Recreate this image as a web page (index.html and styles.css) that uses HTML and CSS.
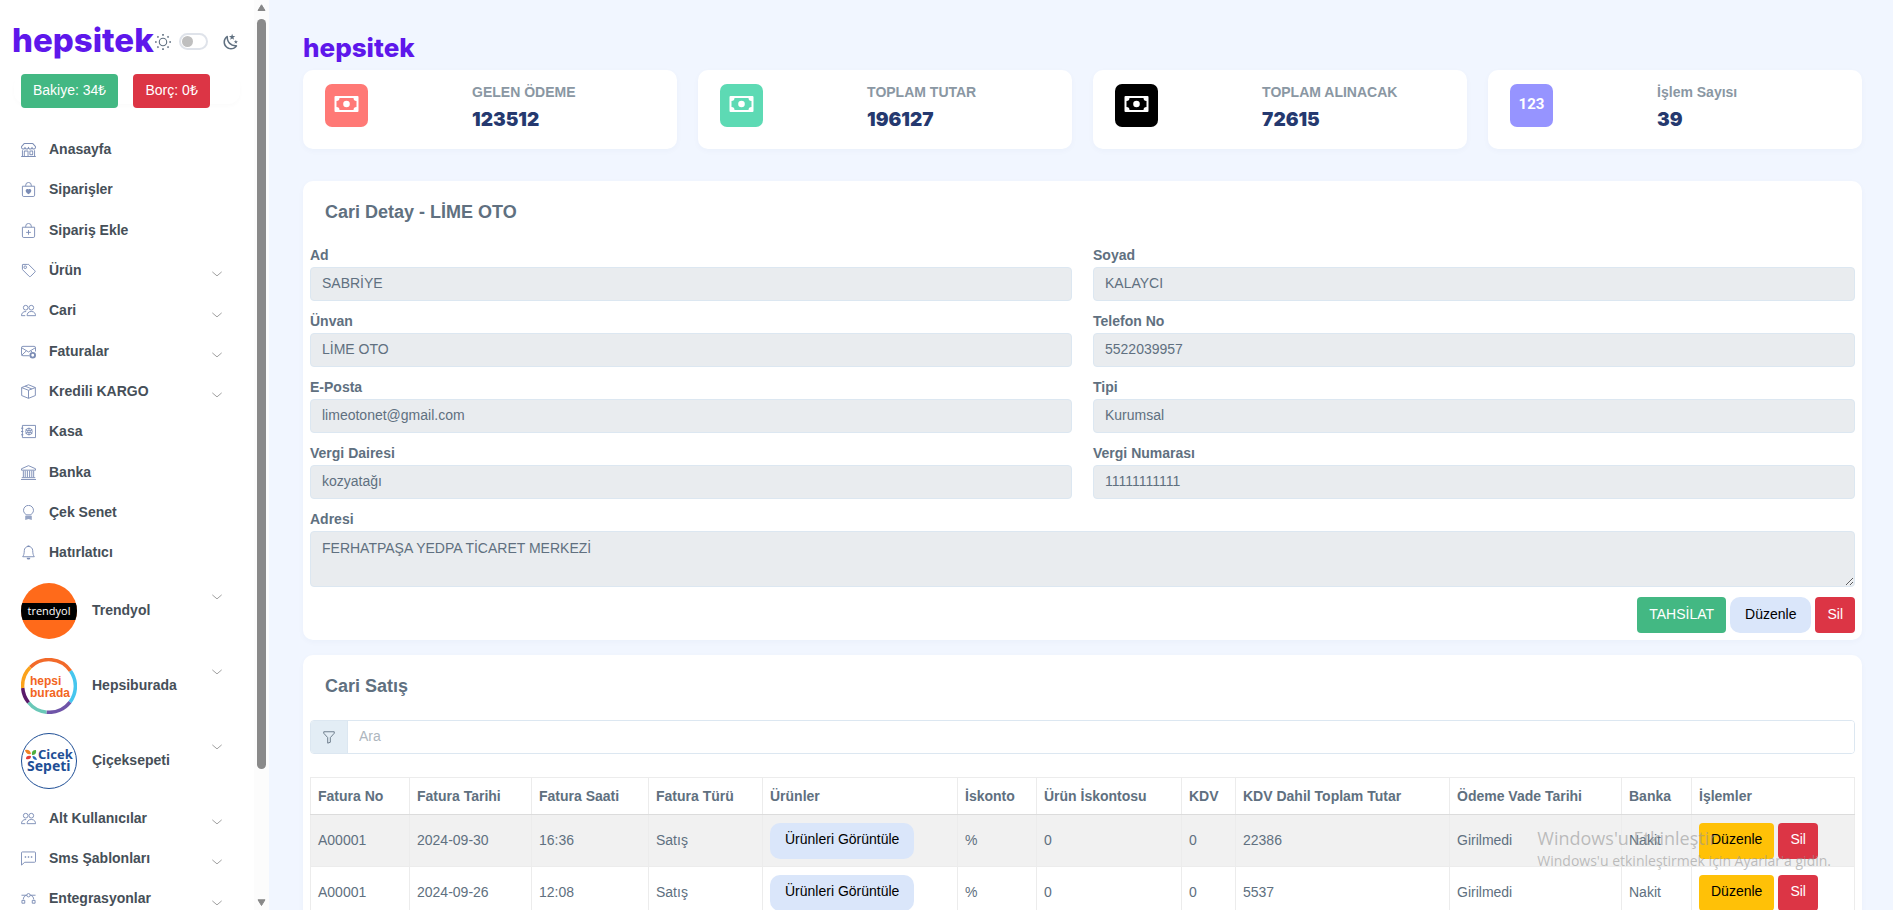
FILE: index.html
```html
<!DOCTYPE html>
<html lang="tr">
<head>
<meta charset="utf-8">
<meta name="viewport" content="width=device-width, initial-scale=1">
<title>hepsitek - Cari Detay</title>
<link rel="stylesheet" href="styles.css">
</head>
<body>
<svg class="sprite" aria-hidden="true">
  <symbol id="i-chevron" viewBox="0 0 16 16"><path d="M1 5l7 6 7-6" fill="none" stroke="currentColor" stroke-width="1.5" stroke-linecap="round" stroke-linejoin="round"/></symbol>
  <symbol id="i-shop" viewBox="0 0 16 16"><path fill="currentColor" d="M2.97 1.35A1 1 0 0 1 3.73 1h8.54a1 1 0 0 1 .76.35l2.609 3.044A1.5 1.5 0 0 1 16 5.37v.255a2.375 2.375 0 0 1-4.25 1.458A2.37 2.37 0 0 1 9.875 8 2.37 2.37 0 0 1 8 7.083 2.37 2.37 0 0 1 6.125 8a2.37 2.37 0 0 1-1.875-.917A2.375 2.375 0 0 1 0 5.625V5.37a1.5 1.5 0 0 1 .361-.976zm1.78 4.275a1.375 1.375 0 0 0 2.75 0 .5.5 0 0 1 1 0 1.375 1.375 0 0 0 2.75 0 .5.5 0 0 1 1 0 1.375 1.375 0 1 0 2.75 0V5.37a.5.5 0 0 0-.12-.325L12.27 2H3.73L1.12 5.045A.5.5 0 0 0 1 5.37v.255a1.375 1.375 0 0 0 2.75 0 .5.5 0 0 1 1 0M1.5 8.5A.5.5 0 0 1 2 9v6h1v-5a1 1 0 0 1 1-1h3a1 1 0 0 1 1 1v5h6V9a.5.5 0 0 1 1 0v6h.5a.5.5 0 0 1 0 1H.5a.5.5 0 0 1 0-1H1V9a.5.5 0 0 1 .5-.5M4 15h3v-5H4zm5-5a1 1 0 0 1 1-1h2a1 1 0 0 1 1 1v3a1 1 0 0 1-1 1h-2a1 1 0 0 1-1-1zm3 0h-2v3h2z"/></symbol>
  <symbol id="i-bag-heart" viewBox="0 0 16 16"><path d="M1.5 4.5h13V14a1.500 1.500 0 0 1-1.500 1.500H3A1.500 1.500 0 0 1 1.500 14zM5 4.500V3.500a3 3 0 0 1 6 0v1" fill="none" stroke="currentColor"/><path d="M8 7.990c1.660-1.700 5.830 1.280 0 5.130-5.830-3.850-1.660-6.830 0-5.130" fill="currentColor"/></symbol>
  <symbol id="i-bag-plus" viewBox="0 0 16 16"><path d="M1.5 4.5h13V14a1.500 1.500 0 0 1-1.500 1.500H3A1.500 1.500 0 0 1 1.500 14zM5 4.500V3.500a3 3 0 0 1 6 0v1M8 7.500v5M5.500 10h5" fill="none" stroke="currentColor"/></symbol>
  <symbol id="i-tag" viewBox="0 0 16 16"><path d="M1.500 2v4.590a1 1 0 0 0 .29.700l7 7a1 1 0 0 0 1.420 0l4.590-4.580a1 1 0 0 0 0-1.420l-7-7A1 1 0 0 0 7.090 1.500H2a.5.5 0 0 0-.5.5z" fill="none" stroke="currentColor"/><circle cx="4.500" cy="4.500" r="1.400" fill="none" stroke="currentColor"/></symbol>
  <symbol id="i-people" viewBox="0 0 16 16"><path d="M11 7.500a2.500 2.500 0 1 0 0-5 2.500 2.500 0 0 0 0 5zM6.500 13.500h9c0-2-1-4.500-4.500-4.500s-4.500 2.500-4.500 4.500zM5 7.500a2.500 2.500 0 1 1 0-5 2.500 2.500 0 0 1 2.500 2.500 2.500 2.500 0 0 1-2.500 2.500M5.500 9.100C2 8.800.5 11.300.5 13.500h4" fill="none" stroke="currentColor" stroke-linejoin="round"/></symbol>
  <symbol id="i-mail" viewBox="0 0 16 16"><path d="M9 12.500H2A1.500 1.500 0 0 1 .5 11V4A1.500 1.500 0 0 1 2 2.500h12A1.500 1.500 0 0 1 15.500 4v4M.7 4L8 8.500 15.300 4M.7 12l5-4.700M10.300 7.400l1.500 1" fill="none" stroke="currentColor"/><circle cx="12.500" cy="12" r="2.500" fill="none" stroke="currentColor" stroke-width="2"/></symbol>
  <symbol id="i-box" viewBox="0 0 16 16"><path d="M8 .8l7.300 3v8.500L8 15.300.7 12.300V3.800zM.7 3.800L8 6.700l7.300-2.900M8 6.700v8.500M4.300 2.300l7.300 3" fill="none" stroke="currentColor" stroke-linejoin="round"/></symbol>
  <symbol id="i-safe" viewBox="0 0 16 16"><path d="M1.500 1.500h14v13h-14zM0 4.500h2.500M0 8h2.500M0 11.500h2.500M8.500 4v8M5 6l7 4M5 10l7-4" fill="none" stroke="currentColor"/><circle cx="8.500" cy="8" r="3.500" fill="none" stroke="currentColor"/><circle cx="8.500" cy="8" r="1.300" fill="#fff" stroke="currentColor"/></symbol>
  <symbol id="i-bank" viewBox="0 0 16 16"><path d="M.5 4L8 .7 15.500 4v1.500H.5zM0 15.500h16M.8 13.500h14.400M2.500 6v7M4.500 6v7M6.800 6v7M9.200 6v7M11.500 6v7M13.500 6v7" fill="none" stroke="currentColor"/></symbol>
  <symbol id="i-bulb" viewBox="0 0 16 16"><path d="M5.500 10.500C4.500 9 2.700 8.300 2.700 5.700a5.200 5.200 0 0 1 10.600 0c0 2.600-1.800 3.300-2.800 4.800z" fill="none" stroke="currentColor"/><path d="M4.500 11.500h7v4.500L8 15l-3.500 1z" fill="currentColor" opacity=".8"/></symbol>
  <symbol id="i-bell" viewBox="0 0 16 16"><path d="M8 1.500A4.500 4.500 0 0 0 3.500 6c0 3.500-.8 5.300-1.700 6.500h12.400c-.9-1.200-1.700-3-1.700-6.500A4.500 4.500 0 0 0 8 1.500z" fill="none" stroke="currentColor" stroke-linejoin="round"/><path d="M6 13.500h4a2 2 0 0 1-4 0zM7 .500h2v1.500H7z" fill="currentColor"/></symbol>
  <symbol id="i-chat" viewBox="0 0 16 16"><path d="M.5 15V2a1 1 0 0 1 1-1h13a1 1 0 0 1 1 1v9a1 1 0 0 1-1 1H4z" fill="none" stroke="currentColor" stroke-linejoin="round"/><path d="M4 6.500h1.500M7.250 6.500h1.500M10.500 6.500H12" stroke="currentColor" stroke-width="1.600"/></symbol>
  <symbol id="i-bezier" viewBox="0 0 16 16"><path d="M.5 4.500H6M10 4.500h5.500M6 4.500C3.500 5 2.500 7 2.500 9M10 4.500c2.500.5 3.500 2.500 3.500 4.500M1 10h3v3H1zM12 10h3v3h-3z" fill="none" stroke="currentColor"/><circle cx="8" cy="4.500" r="1.800" fill="none" stroke="currentColor"/></symbol>
  <symbol id="i-cash" viewBox="0 0 24 16"><path fill-rule="evenodd" fill="currentColor" d="M1 0h22a1 1 0 0 1 1 1v14a1 1 0 0 1-1 1H1a1 1 0 0 1-1-1V1a1 1 0 0 1 1-1zM5 2a3 3 0 0 1-3 3v6a3 3 0 0 1 3 3h14a3 3 0 0 1 3-3V5a3 3 0 0 1-3-3zM12 4.700a3.300 3.300 0 1 1 0 6.600 3.300 3.300 0 0 1 0-6.600z"/></symbol>
  <symbol id="i-funnel" viewBox="0 0 16 16"><path d="M2 2h12v1.700L9.500 8.700v5.300l-3 1V8.700L2 3.700z" fill="none" stroke="currentColor" stroke-linejoin="round"/></symbol>
</svg>

<div class="app">
  <aside class="sidebar">
    <div class="sidebar-body">
      <div class="sidebar-top">
        <a class="brand brand-lg" href="#">hepsitek</a>
        <svg class="sun" viewBox="0 0 16 16" aria-hidden="true"><circle cx="8" cy="8" r="3.700" fill="none" stroke="currentColor" stroke-width="1.100"/><path d="M8 0v1.700M8 14.300V16M0 8h1.700M14.300 8H16M2.400 2.400l1.100 1.100M12.500 12.500l1.100 1.100M2.400 13.600l1.100-1.100M12.500 3.500l1.100-1.100" stroke="currentColor" stroke-width="1.600"/></svg>
        <input class="switch" type="checkbox" aria-label="Karanlık mod">
        <svg class="moon" viewBox="0 0 24 24" aria-hidden="true"><path fill="currentColor" d="m17.750 4.090l-2.530 1.940l.91 3.060l-2.630-1.810l-2.630 1.810l.91-3.060l-2.530-1.940L12.440 4l1.060-3l1.060 3l3.190.09m3.500 6.910l-1.640 1.250l.59 1.980l-1.700-1.170l-1.700 1.170l.59-1.980L15.750 11l2.060-.05L18.500 9l.69 1.950l2.060.05m-2.280 4.950c.83-.08 1.720 1.100 1.190 1.850c-.32.45-.66.870-1.080 1.270C15.170 23 8.840 23 4.940 19.070c-3.910-3.900-3.910-10.240 0-14.140c.4-.4.82-.76 1.270-1.080c.75-.53 1.930.36 1.850 1.190c-.27 2.860.69 5.830 2.890 8.020a9.960 9.960 0 0 0 8.020 2.890m-1.640 2.020a12.080 12.080 0 0 1-7.800-3.470c-2.170-2.190-3.330-5-3.490-7.820c-2.810 3.140-2.700 7.960.31 10.980c3.020 3.010 7.840 3.120 10.980.31Z"/></svg>
      </div>
      <div class="balance">
        <button class="btn btn-green" type="button">Bakiye: 34₺</button>
        <button class="btn btn-red" type="button">Borç: 0₺</button>
      </div>
      <nav>
        <ul class="menu">
          <li><a href="#"><svg class="ico"><use href="#i-shop"/></svg><span>Anasayfa</span></a></li>
          <li><a href="#"><svg class="ico"><use href="#i-bag-heart"/></svg><span>Siparişler</span></a></li>
          <li><a href="#"><svg class="ico"><use href="#i-bag-plus"/></svg><span>Sipariş Ekle</span></a></li>
          <li><a href="#"><svg class="ico"><use href="#i-tag"/></svg><span>Ürün</span><svg class="chev"><use href="#i-chevron"/></svg></a></li>
          <li><a href="#"><svg class="ico"><use href="#i-people"/></svg><span>Cari</span><svg class="chev"><use href="#i-chevron"/></svg></a></li>
          <li><a href="#"><svg class="ico"><use href="#i-mail"/></svg><span>Faturalar</span><svg class="chev"><use href="#i-chevron"/></svg></a></li>
          <li><a href="#"><svg class="ico"><use href="#i-box"/></svg><span>Kredili KARGO</span><svg class="chev"><use href="#i-chevron"/></svg></a></li>
          <li><a href="#"><svg class="ico"><use href="#i-safe"/></svg><span>Kasa</span></a></li>
          <li><a href="#"><svg class="ico"><use href="#i-bank"/></svg><span>Banka</span></a></li>
          <li><a href="#"><svg class="ico"><use href="#i-bulb"/></svg><span>Çek Senet</span></a></li>
          <li><a href="#"><svg class="ico"><use href="#i-bell"/></svg><span>Hatırlatıcı</span></a></li>
          <li class="market"><a href="#">
            <svg class="market-logo" viewBox="0 0 56 56"><defs><clipPath id="disc"><circle cx="28" cy="28" r="28"/></clipPath></defs><g clip-path="url(#disc)"><rect width="56" height="56" fill="#ff6a1a"/><rect y="20" width="56" height="17" fill="#000"/></g><text class="ty" x="28" y="32" text-anchor="middle">trendyol</text></svg>
            <span>Trendyol</span><svg class="chev"><use href="#i-chevron"/></svg></a></li>
          <li class="market"><a href="#">
            <svg class="market-logo" viewBox="0 0 56 56"><g fill="none" stroke-width="3.500"><path d="M9.300 9.300A26.300 26.300 0 0 1 49.500 12.900" stroke="#f26a2a"/><path d="M49.500 12.900A26.300 26.300 0 0 1 49 44.100" stroke="#46c6ee"/><path d="M49 44.100A26.300 26.300 0 0 1 25.500 54.200" stroke="#6f55a8"/><path d="M25.500 54.200A26.300 26.300 0 0 1 7.500 44.500" stroke="#6ac8b8"/><path d="M7.500 44.500A26.300 26.300 0 0 1 1.700 30" stroke="#5a1a6a"/><path d="M1.700 30A26.300 26.300 0 0 1 9.300 9.300" stroke="#fba21c"/></g><text class="hb" x="9" y="27">hepsi</text><text class="hb" x="9" y="39">burada</text></svg>
            <span>Hepsiburada</span><svg class="chev"><use href="#i-chevron"/></svg></a></li>
          <li class="market"><a href="#">
            <svg class="market-logo" viewBox="0 0 56 56"><circle cx="28" cy="28" r="27.500" fill="#fff" stroke="#1f4f96"/><path d="M4 17q5-1 6 4q-5 1-6-4z" fill="#f08223"/><path d="M15 17q-5 0-4 5q5 0 4-5z" fill="#4fae3d"/><path d="M5 26q0-4 5-3q0 4-5 3z" fill="#e23b3b"/><path d="M16 27q-1-4-4.500-4q0 4 4.500 4z" fill="#2b6cb8"/><text class="cs cs-top" x="17" y="26">Cicek</text><text class="cs" x="6" y="38">Sepeti</text></svg>
            <span>Çiçeksepeti</span><svg class="chev"><use href="#i-chevron"/></svg></a></li>
          <li><a href="#"><svg class="ico"><use href="#i-people"/></svg><span>Alt Kullanıcılar</span><svg class="chev"><use href="#i-chevron"/></svg></a></li>
          <li><a href="#"><svg class="ico"><use href="#i-chat"/></svg><span>Sms Şablonları</span><svg class="chev"><use href="#i-chevron"/></svg></a></li>
          <li><a href="#"><svg class="ico"><use href="#i-bezier"/></svg><span>Entegrasyonlar</span><svg class="chev"><use href="#i-chevron"/></svg></a></li>
        </ul>
      </nav>
    </div>
    <div class="rail" aria-hidden="true">
      <svg viewBox="0 0 9 7"><path d="M1 6.500L4.500.8 8 6.500z" fill="#888" stroke="#888" stroke-linejoin="round"/></svg>
      <div class="rail-track"><div class="rail-thumb"></div></div>
      <svg viewBox="0 0 9 7"><path d="M1 .8h7L4.500 6.500z" fill="#888" stroke="#888" stroke-linejoin="round"/></svg>
    </div>
  </aside>

  <main class="main">
    <header class="topbar"><a class="brand brand-sm" href="#">hepsitek</a></header>

    <section class="stats">
      <article class="card stat"><div class="stat-icon red"><svg><use href="#i-cash"/></svg></div><div><h6>GELEN ÖDEME</h6><strong>123512</strong></div></article>
      <article class="card stat"><div class="stat-icon green"><svg><use href="#i-cash"/></svg></div><div><h6>TOPLAM TUTAR</h6><strong>196127</strong></div></article>
      <article class="card stat"><div class="stat-icon black"><svg><use href="#i-cash"/></svg></div><div><h6>TOPLAM ALINACAK</h6><strong>72615</strong></div></article>
      <article class="card stat"><div class="stat-icon purple">123</div><div><h6>İşlem Sayısı</h6><strong>39</strong></div></article>
    </section>

    <section class="card panel">
      <h4>Cari Detay - LİME OTO</h4>
      <form class="fields">
        <div class="field"><label for="ad">Ad</label><input id="ad" type="text" value="SABRİYE" readonly></div>
        <div class="field"><label for="soyad">Soyad</label><input id="soyad" type="text" value="KALAYCI" readonly></div>
        <div class="field"><label for="unvan">Ünvan</label><input id="unvan" type="text" value="LİME OTO" readonly></div>
        <div class="field"><label for="tel">Telefon No</label><input id="tel" type="text" value="5522039957" readonly></div>
        <div class="field"><label for="eposta">E-Posta</label><input id="eposta" type="text" value="limeotonet@gmail.com" readonly></div>
        <div class="field"><label for="tipi">Tipi</label><input id="tipi" type="text" value="Kurumsal" readonly></div>
        <div class="field"><label for="vd">Vergi Dairesi</label><input id="vd" type="text" value="kozyatağı" readonly></div>
        <div class="field"><label for="vn">Vergi Numarası</label><input id="vn" type="text" value="11111111111" readonly></div>
        <div class="field wide"><label for="adres">Adresi</label><textarea id="adres" readonly>FERHATPAŞA YEDPA TİCARET MERKEZİ</textarea></div>
      </form>
      <div class="actions">
        <button class="btn btn-green" type="button">TAHSİLAT</button>
        <button class="btn btn-soft" type="button">Düzenle</button>
        <button class="btn btn-red" type="button">Sil</button>
      </div>
    </section>

    <section class="card panel">
      <h4>Cari Satış</h4>
      <div class="search"><label for="ara" aria-label="Ara"><svg><use href="#i-funnel"/></svg></label><input id="ara" type="text" placeholder="Ara"></div>
      <table>
        <colgroup><col class="c1"><col class="c2"><col class="c3"><col class="c4"><col class="c5"><col class="c6"><col class="c7"><col class="c8"><col class="c9"><col class="c10"><col class="c11"><col class="c12"></colgroup>
        <thead><tr><th>Fatura No</th><th>Fatura Tarihi</th><th>Fatura Saati</th><th>Fatura Türü</th><th>Ürünler</th><th>İskonto</th><th>Ürün İskontosu</th><th>KDV</th><th>KDV Dahil Toplam Tutar</th><th>Ödeme Vade Tarihi</th><th>Banka</th><th>İşlemler</th></tr></thead>
        <tbody>
          <tr><td>A00001</td><td>2024-09-30</td><td>16:36</td><td>Satış</td><td><button class="btn btn-soft" type="button">Ürünleri Görüntüle</button></td><td>%</td><td>0</td><td>0</td><td>22386</td><td>Girilmedi</td><td>Nakit</td><td><div class="row-actions"><button class="btn btn-yellow" type="button">Düzenle</button><button class="btn btn-red" type="button">Sil</button></div></td></tr>
          <tr><td>A00001</td><td>2024-09-26</td><td>12:08</td><td>Satış</td><td><button class="btn btn-soft" type="button">Ürünleri Görüntüle</button></td><td>%</td><td>0</td><td>0</td><td>5537</td><td>Girilmedi</td><td>Nakit</td><td><div class="row-actions"><button class="btn btn-yellow" type="button">Düzenle</button><button class="btn btn-red" type="button">Sil</button></div></td></tr>
        </tbody>
      </table>
    </section>
  </main>

  <div class="activation"><p class="big">Windows'u Etkinleştir</p><p>Windows'u etkinleştirmek için Ayarlar'a gidin.</p></div>
</div>
</body>
</html>
```

FILE: styles.css
```css
* { box-sizing: border-box; }
body {
  margin: 0;
  background: #f1f6ff;
  color: #607080;
  font: 14px/21px "Liberation Sans", Arial, sans-serif;
}
h4, h6, p, ul { margin: 0; padding: 0; }
a { color: inherit; text-decoration: none; }
input, textarea, button { font: inherit; }
.sprite { position: absolute; width: 0; height: 0; }

.app { display: flex; height: 100vh; overflow: hidden; }

/* Sidebar */
.sidebar { display: flex; flex: none; width: 269px; background: #fff; overflow: hidden; }
.sidebar-body { flex: 1; overflow: hidden; }
.sidebar-top {
  display: flex;
  align-items: center;
  height: 74px;
  padding: 9px 0 0 12px;
}
.brand { color: #5e17eb; font-family: Inter, "Open Sans", sans-serif; font-weight: 800; }
.brand-lg { width: 143px; padding-bottom: 4px; font-size: 33px; line-height: 40px; }
.brand-sm { font-size: 26px; line-height: 32px; }
.sun { width: 16px; height: 16px; color: #607080; }
.switch {
  appearance: none;
  display: flex;
  align-items: center;
  width: 29px;
  height: 17px;
  margin: 0 14px 0 8px;
  padding: 0 1px;
  border: 2px solid #dfe3ea;
  border-radius: 9px;
  background: #fff;
}
.switch::before { content: ""; width: 11px; height: 11px; border-radius: 50%; background: #bfbfbf; }
.moon { width: 18px; height: 18px; color: #607080; }
.balance {
  display: flex;
  gap: 15px;
  height: 30px;
  margin: 0 14px 25px;
  padding: 0 7px;
  border-radius: 12px;
  box-shadow: 0 2px 4px rgba(0, 0, 0, .02);
}
.balance .btn { height: 34px; }
.menu { list-style: none; }
.menu li { height: 40px; }
.menu li:nth-child(3n+2) { height: 41px; }
.menu li.market { height: 75px; }
.menu a {
  display: flex;
  align-items: center;
  height: 100%;
  padding: 0 32px 0 21px;
  color: #464f58;
  font-weight: 700;
}
.ico { flex: none; width: 15px; height: 15px; margin-right: 13px; color: #7c8db5; overflow: visible; }
.chev { width: 10px; height: 10px; margin: 8px 0 0 auto; color: #9a9a9a; overflow: visible; }
.market-logo { width: 56px; height: 56px; margin-right: 15px; }
.market .chev { align-self: flex-start; margin-top: 19px; }
.ty { fill: #fff; font: 500 11px "Open Sans", sans-serif; }
.hb { fill: #f26522; font: 700 12px "Liberation Sans", Arial, sans-serif; }
.cs { fill: #1f4f96; font: 700 14px "Noto Sans", sans-serif; }
.cs-top { font-size: 13px; }

.rail {
  display: flex;
  flex-direction: column;
  align-items: center;
  flex: none;
  width: 15px;
  padding: 4px 0;
  background: #fcfcfc;
}
.rail svg { width: 9px; height: 7px; }
.rail-track { flex: 1; width: 9px; padding: 8px 0; }
.rail-thumb { height: 86%; border-radius: 5px; background: #8a8a8a; }

/* Content */
.main { flex: 1; min-width: 0; padding: 32px 31px 0 34px; overflow: hidden; }
.topbar { display: flex; height: 38px; }
.card { background: #fff; border-radius: 10px; box-shadow: 0 2px 6px rgba(30, 60, 120, .03); }

.stats { display: grid; grid-template-columns: repeat(4, 1fr); gap: 21px; margin-bottom: 32px; }
.stat { display: grid; grid-template-columns: 37% 1fr; height: 79px; padding: 12px 22px 0; }
.stat > div:last-child { padding-left: 25px; }
.stat h6 { color: #8a97a3; font-size: 14px; line-height: 21px; }
.stat strong { display: block; padding-top: 5px; color: #25396f; font: 900 19px/24px Inter, sans-serif; }
.stat-icon {
  display: flex;
  align-items: center;
  justify-content: center;
  width: 43px;
  height: 43px;
  margin-top: 2px;
  padding-bottom: 3px;
  border-radius: 7px;
  color: #fff;
  font: 700 15px/20px Roboto, sans-serif;
}
.stat-icon svg { width: 25px; height: 16px; }
.red { background: #ff7976; }
.green { background: #5ddab4; }
.black { background: #000; }
.purple { background: #9694ff; }

.panel { margin-bottom: 15px; padding: 0 7px 7px; }
.panel h4 { height: 64px; padding: 19px 15px 0; font-size: 18px; line-height: 24px; }
.fields { display: grid; grid-template-columns: 1fr 1fr; gap: 10px 21px; }
.wide { grid-column: 1 / -1; }
.field label { display: block; padding-bottom: 1px; font-weight: 700; }
.field input, .field textarea {
  display: block;
  width: 100%;
  height: 34px;
  padding: 4px 11px 6px;
  border: 1px solid #dce7f1;
  border-radius: 4px;
  background: #e9ecef;
  color: #607080;
}
.field textarea { height: 56px; padding-top: 6px; resize: vertical; }
.actions { display: flex; justify-content: flex-end; gap: 4px; margin-top: 10px; }

.btn { height: 36px; padding: 0 12px 2px; border: 0; border-radius: 4px; white-space: nowrap; }
.btn-green { background: #43b883; color: #fff; }
.btn-red { background: #dc3545; color: #fff; }
.btn-yellow { background: #ffc107; color: #000; }
.btn-soft { padding: 0 15px 2px; border-radius: 10px; background: #dae6fa; color: #000; }

.search { display: flex; height: 34px; margin: 1px 0 23px; border: 1px solid #dce7f1; border-radius: 4px; overflow: hidden; }
.search label {
  display: flex;
  align-items: center;
  justify-content: center;
  width: 37px;
  border-right: 1px solid #dce7f1;
  background: #e3edf5;
}
.search svg { width: 14px; height: 16px; }
.search input { flex: 1; padding: 0 11px 2px; border: 0; background: #fff; }
.search input::placeholder { color: #aeb6be; }

table { width: 100%; table-layout: fixed; border-collapse: collapse; }
th, td { padding: 0 7px; border: 1px solid #ececec; text-align: left; white-space: nowrap; }
th { height: 37px; border-bottom-color: #dcdcdc; }
td { height: 52px; }
tbody tr:nth-child(odd) { background: #f1f1f1; }
.row-actions { display: flex; gap: 4px; }
.c1 { width: 99px; }
.c2 { width: 122px; }
.c3 { width: 117px; }
.c4 { width: 114px; }
.c5 { width: 195px; }
.c6 { width: 79px; }
.c7 { width: 145px; }
.c8 { width: 54px; }
.c9 { width: 214px; }
.c10 { width: 172px; }
.c11 { width: 70px; }
.c12 { width: 163px; }

/* System notice floating over the page */
.activation {
  position: absolute;
  right: 62px;
  bottom: 39px;
  color: rgba(150, 150, 150, .6);
  font: 14px/20px "Open Sans", "Noto Sans", sans-serif;
  pointer-events: none;
}
.activation .big { font-size: 18px; line-height: 26px; }
```
